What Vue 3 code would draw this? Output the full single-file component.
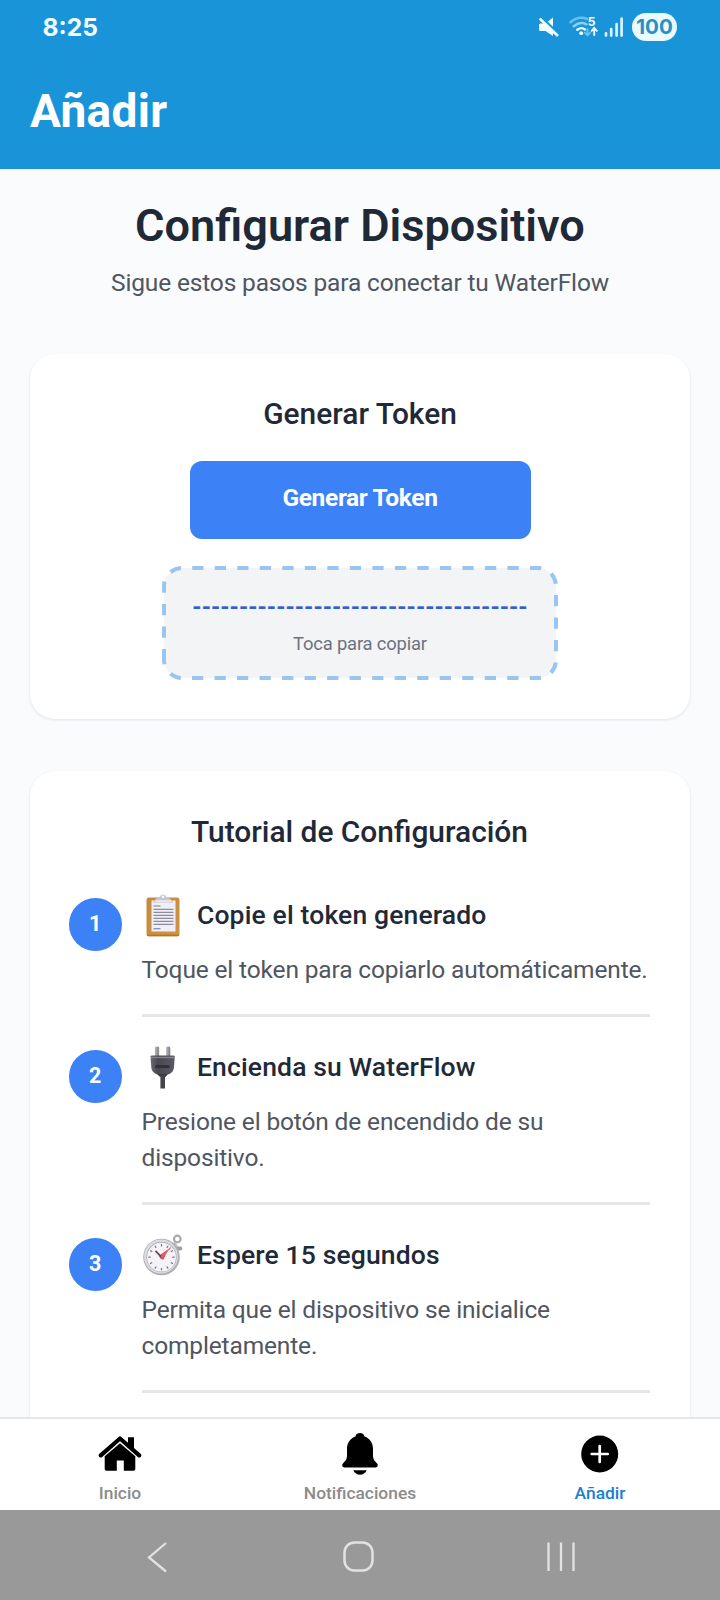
<script setup>
const steps = [
  { n: 1, icon: 'clipboard', title: 'Copie el token generado', lines: ['Toque el token para copiarlo automáticamente.'] },
  { n: 2, icon: 'plug', title: 'Encienda su WaterFlow', lines: ['Presione el botón de encendido de su', 'dispositivo.'] },
  { n: 3, icon: 'stopwatch', title: 'Espere 15 segundos', lines: ['Permita que el dispositivo se inicialice', 'completamente.'] },
]
const token = '-'.repeat(36)
const ticks = Array.from({ length: 12 }, (_, i) => i * 30)
</script>

<template>
  <div class="screen">
    <header class="header">
      <div class="status">
        <span class="time">8:25</span>
        <div class="indicators">
          <svg class="mute" width="22" height="22" viewBox="0 0 22 22">
            <path d="M1 9Q1 7.5 2.5 7.5H7.5L15 1.5V20L7.5 15H2.5Q1 15 1 13.5Z" fill="#f2fdff" />
            <path d="M3.2 1.2L21 18.3" stroke="#1a94d8" stroke-width="2.6" />
            <path d="M1.6 2.5L20 20" stroke="#f2fdff" stroke-width="2.6" />
          </svg>
          <svg class="wifi" width="30" height="24" viewBox="0 0 30 24">
            <g fill="none" stroke-linecap="round">
              <path d="M1.5 7.2Q9.5 .2 18 4" stroke="#69c0ee" stroke-width="2.5" />
              <path d="M4.8 11.2Q11 6 17.5 9.3" stroke="#8bd0f3" stroke-width="2.5" />
              <path d="M8.3 14.7Q12.2 11.7 16 14.4" stroke="#f2fdff" stroke-width="2.4" />
              <path d="M18.5 14V20M15.8 17.6L18.5 20.4L21.2 17.6" stroke="#69c0ee" stroke-width="2" />
              <path d="M25.2 20V13.4M22.6 15.8L25.2 13L27.8 15.8" stroke="#f2fdff" stroke-width="1.9" />
            </g>
            <circle cx="12.2" cy="18.2" r="1.9" fill="#f2fdff" />
            <text x="18.8" y="10.5" class="band">5</text>
          </svg>
          <svg class="signal" width="20" height="22" viewBox="0 0 20 22">
            <path d="M2 17.4V19.6M7.2 13V19.6M12.6 8V19.6M17.6 2.6V19.6" stroke="#d9f4ff" stroke-width="2.7" stroke-linecap="round" />
          </svg>
          <span class="battery">100</span>
        </div>
      </div>
      <div class="app-title">Añadir</div>
    </header>

    <main class="content">
      <h1>Configurar Dispositivo</h1>
      <p class="subtitle">Sigue estos pasos para conectar tu WaterFlow</p>

      <section class="card token-card">
        <h2>Generar Token</h2>
        <button class="generate">Generar Token</button>
        <div class="token-box">
          <svg class="outline" width="396" height="114" viewBox="0 0 396 114">
            <path
              d="M2 94.3V20A18 18 0 0 1 20 2H376A18 18 0 0 1 394 20V94A18 18 0 0 1 376 112H20A18 18 0 0 1 2 94.3"
              fill="#f3f4f6" stroke="#9ac5ef" stroke-width="4" stroke-dasharray="11.26 11.26" />
          </svg>
          <div class="token">{{ token }}</div>
          <div class="hint">Toca para copiar</div>
        </div>
      </section>

      <section class="card tutorial">
        <h2 class="h-tutorial">Tutorial de Configuración</h2>
        <div v-for="s in steps" :key="s.n" class="step">
          <div class="badge">{{ s.n }}</div>
          <div class="step-body">
            <div class="step-head">
              <svg v-if="s.icon === 'clipboard'" width="42" height="44" viewBox="0 0 42 44">
                <defs>
                  <linearGradient id="wood" x1="0" x2="1" y1="0" y2="1">
                    <stop offset="0" stop-color="#c58a3e" /><stop offset="1" stop-color="#ce9444" />
                  </linearGradient>
                </defs>
                <rect x="4.5" y="4.5" width="33" height="39" rx="2.5" fill="url(#wood)" />
                <path d="M5 42.3H37" stroke="#a97430" stroke-width="1.2" />
                <path d="M9.5 7.5H33.5V38.5H9.5Z" fill="#f0eff6" />
                <path d="M14 5.5L17.2 4.2Q18.5 1.5 21 1.5T24.8 4.2L28 5.5L31.5 9.5H11Z" fill="#c6c7ce" />
                <path d="M13.5 8H29" stroke="#f4f4f7" stroke-width="1.3" />
                <circle cx="21" cy="3.8" r="1.2" fill="#fff" />
                <path d="M11.5 13H18.5" stroke="#85869a" stroke-width="1.1" />
                <path d="M11.5 16.4H31.5M11.5 19.4H31.5M11.5 22.4H31.5M11.5 25.4H31.5M11.5 28.4H31.5M11.5 31.4H31.5" stroke="#8c8c9c" stroke-width="1.3" />
                <path d="M11.5 35.7H18.5" stroke="#7886bd" stroke-width="1.2" />
              </svg>
              <svg v-else-if="s.icon === 'plug'" width="42" height="44" viewBox="0 0 42 44">
                <defs>
                  <linearGradient id="rubber" x1="0" x2="1">
                    <stop offset="0" stop-color="#6a6972" /><stop offset=".3" stop-color="#494851" /><stop offset="1" stop-color="#5b5a64" />
                  </linearGradient>
                </defs>
                <rect x="13" y="1.5" width="4.2" height="11" rx="1.5" fill="#a9a8b0" />
                <rect x="24.2" y="1.5" width="4.2" height="11" rx="1.5" fill="#a9a8b0" />
                <path d="M16 2V11M27.2 2V11" stroke="#737279" stroke-width="1" />
                <path d="M8.5 11.5Q8.5 10.5 10 10.5H31.2Q32.7 10.5 32.7 11.5L32 22.5Q31.5 27 27 29.2H14.5Q9.7 27 9.3 22.5Z" fill="url(#rubber)" />
                <path d="M9 12.5H32.2" stroke="#85848f" stroke-width="1.4" />
                <path d="M14.5 21.5H26.5" stroke="#32313b" stroke-width="3" stroke-linecap="round" />
                <path d="M15 29H26L23.5 32H18Z" fill="#3a3942" />
                <path d="M20.7 30V43.5" stroke="#45444d" stroke-width="4.6" />
              </svg>
              <svg v-else width="42" height="44" viewBox="0 0 42 44">
                <circle cx="35.3" cy="6" r="3.3" fill="none" stroke="#a9a9ad" stroke-width="2.2" />
                <path d="M31 10L34 14.5" stroke="#bcbcc0" stroke-width="4.5" />
                <path d="M35 15.5H38.3" stroke="#9d9da2" stroke-width="4" stroke-linecap="round" />
                <circle cx="19.5" cy="24" r="18.3" fill="#aeaeb2" />
                <circle cx="19" cy="23.5" r="17" fill="#dcdce0" />
                <circle cx="19.5" cy="24" r="15.2" fill="#b2b2b8" />
                <circle cx="19.5" cy="24.2" r="14.4" fill="#f5f3f9" />
                <path v-for="t in ticks" :key="t" d="M19.5 11V13.5" :transform="`rotate(${t} 19.5 24.2)`" stroke="#77777f" stroke-width="1.2" />
                <path d="M17 22.8L26.5 16.1L21.5 26.6Q18.5 27.1 17 22.8Z" fill="#df4f59" />
                <path d="M19.5 24.2L13.5 17.8" stroke="#684650" stroke-width="1.7" />
                <path d="M19.5 24.2L28.8 14.4" stroke="#e16a70" stroke-width="1.3" />
              </svg>
              <span class="step-title">{{ s.title }}</span>
            </div>
            <div class="desc">
              <div v-for="l in s.lines" :key="l">{{ l }}</div>
            </div>
          </div>
        </div>
      </section>
    </main>

    <nav class="tabs">
      <div class="tab">
        <svg width="44" height="44" viewBox="0 0 44 44">
          <path d="M2.8 23.3L22 6.5L41.2 23.3" fill="none" stroke="#000" stroke-width="4.2" stroke-linejoin="round" stroke-linecap="round" />
          <path d="M30 5.2H36V18.5L30 13.2Z" />
          <path d="M6.7 24.2L22 11.3L37.3 24.2V37Q37.3 38.8 35.5 38.8H25.8V28.5H18.8V38.8H8.5Q6.7 38.8 6.7 37Z" />
        </svg>
        <span>Inicio</span>
      </div>
      <div class="tab">
        <svg width="44" height="44" viewBox="0 0 44 44">
          <path d="M22 1C24.5 1 26.2 2.5 26.5 4.5C32 6.5 35 11 35 17V24C35 27.5 37 29.2 38.9 31.2C40.5 33 39.8 35.4 37.5 35.4H6.5C4.2 35.4 3.5 33 5.1 31.2C7 29.2 9 27.5 9 24V17C9 11 12 6.5 17.5 4.5C17.8 2.5 19.5 1 22 1Z" />
          <path d="M15.2 38.3H28.8Q26.5 42.7 22 42.7T15.2 38.3Z" />
        </svg>
        <span>Notificaciones</span>
      </div>
      <div class="tab active">
        <svg width="44" height="44" viewBox="0 0 44 44">
          <circle cx="21.7" cy="22" r="18.5" />
          <path d="M21.7 14V30M13.7 22H29.7" stroke="#fff" stroke-width="2.7" stroke-linecap="round" />
        </svg>
        <span>Añadir</span>
      </div>
    </nav>

    <footer class="system">
      <svg width="40" height="40" viewBox="0 0 40 40"><path d="M29 6L12 20.5L29 34.5" fill="none" stroke="#e2e2e2" stroke-width="2.3" /></svg>
      <svg width="40" height="40" viewBox="0 0 40 40"><rect x="5.5" y="5.5" width="28" height="28" rx="10" fill="none" stroke="#e2e2e2" stroke-width="2.5" /></svg>
      <svg width="40" height="40" viewBox="0 0 40 40"><path d="M7.5 5.5V34M20 5.5V34M32.5 5.5V34" stroke="#e2e2e2" stroke-width="2.3" /></svg>
    </footer>
  </div>
</template>

<style>
body { margin: 0; }
</style>

<style scoped>
.screen {
  width: 720px;
  height: 1600px;
  display: flex;
  flex-direction: column;
  overflow: hidden;
  background: #f9fbfd;
  font-family: Roboto, "Liberation Sans", sans-serif;
}
h1, h2, p { margin: 0; white-space: nowrap; }
.header { height: 168.5px; flex: none; background: #1a94d8; color: #fff; }
.status { height: 54px; display: flex; align-items: center; justify-content: space-between; padding: 0 43px 0 42.5px; }
.time { font: 700 24.6px/54px Inter, sans-serif; color: #f2fdff; }
.indicators { display: flex; align-items: center; }
.mute { margin-right: 9px; }
.wifi { margin-right: 5px; }
.signal { margin-right: 8px; }
.band { font: 700 12px Inter, sans-serif; fill: #f2fdff; }
.battery {
  width: 45px;
  height: 28px;
  border-radius: 14px;
  background: #e9fbff;
  color: #2b8fc4;
  font: 700 20.5px/28px Inter, sans-serif;
  text-align: center;
}
.app-title { padding-left: 30px; font-size: 46px; line-height: 114px; font-weight: 700; letter-spacing: .3px; }

.content { flex: 1; min-height: 0; overflow: hidden; padding: 29px 30px 0; text-align: center; }
h1 { font-size: 45.1px; line-height: 56px; font-weight: 600; color: #1f2937; }
.subtitle { margin-top: 13px; font-size: 24.5px; line-height: 32px; color: #4f5661; letter-spacing: -.16px; }
.card { background: #fff; border-radius: 25px; box-shadow: 0 1px 3px rgba(20, 30, 50, .1); box-sizing: border-box; }
.token-card { height: 365px; margin-top: 55.5px; padding-top: 41.5px; display: flex; flex-direction: column; align-items: center; }
h2 { font-size: 29.9px; line-height: 36px; font-weight: 500; color: #1f2937; }
.generate {
  margin-top: 29.5px;
  width: 341px;
  height: 78px;
  flex: none;
  border: 0;
  border-radius: 12px;
  padding: 0 0 5px;
  background: #3c81f5;
  color: #fff;
  font: 700 24.5px/32px Roboto, sans-serif;
  letter-spacing: -.35px;
}
.token-box { position: relative; width: 396px; height: 114px; margin-top: 27px; }
.outline { position: absolute; inset: 0; }
.token, .hint { position: relative; white-space: nowrap; }
.token { height: 24px; padding-top: 29px; font-size: 23.65px; line-height: 24px; font-weight: 700; color: #3460cf; }
.hint { margin-top: 13px; font-size: 18.4px; line-height: 24px; color: #6b7280; letter-spacing: -.18px; }

.tutorial { height: 800px; margin-top: 52px; padding: 42.7px 40px 0 39px; }
.h-tutorial { margin-bottom: 43.6px; }
.step { display: flex; align-items: flex-start; text-align: left; margin-bottom: 28px; }
.badge {
  width: 52.5px;
  height: 52.5px;
  margin: 5px 20px 0 0;
  border-radius: 50%;
  flex: none;
  background: #3c81f5;
  color: #fff;
  font-size: 21.5px;
  line-height: 52.5px;
  font-weight: 700;
  text-align: center;
}
.step-body { flex: 1; min-width: 0; border-bottom: 3px solid #e5e6e8; padding-bottom: 26px; }
.step-head { height: 44px; display: flex; align-items: center; gap: 13.5px; }
.step-head svg { flex: none; }
.step-title { font-size: 26.5px; line-height: 44px; font-weight: 500; color: #1f2937; white-space: nowrap; letter-spacing: .14px; }
.desc { margin-top: 14.5px; font-size: 24.5px; line-height: 36.3px; color: #4f5661; white-space: nowrap; letter-spacing: -.15px; }

.tabs { height: 93.5px; flex: none; box-sizing: border-box; border-top: 2px solid #e4e6e9; background: #fff; display: grid; grid-template-columns: repeat(3, 240px); }
.tab { display: flex; flex-direction: column; align-items: center; padding-top: 13.5px; font-size: 17.4px; line-height: 22px; font-weight: 500; color: #8b8b8c; }
.tab svg { flex: none; }
.tab span { margin-top: 6px; }
.tab.active { color: #1b7ed2; }
.system { height: 90px; flex: none; background: #999; display: flex; align-items: center; justify-content: space-between; padding: 3px 139px 0 137px; box-sizing: border-box; }
</style>
